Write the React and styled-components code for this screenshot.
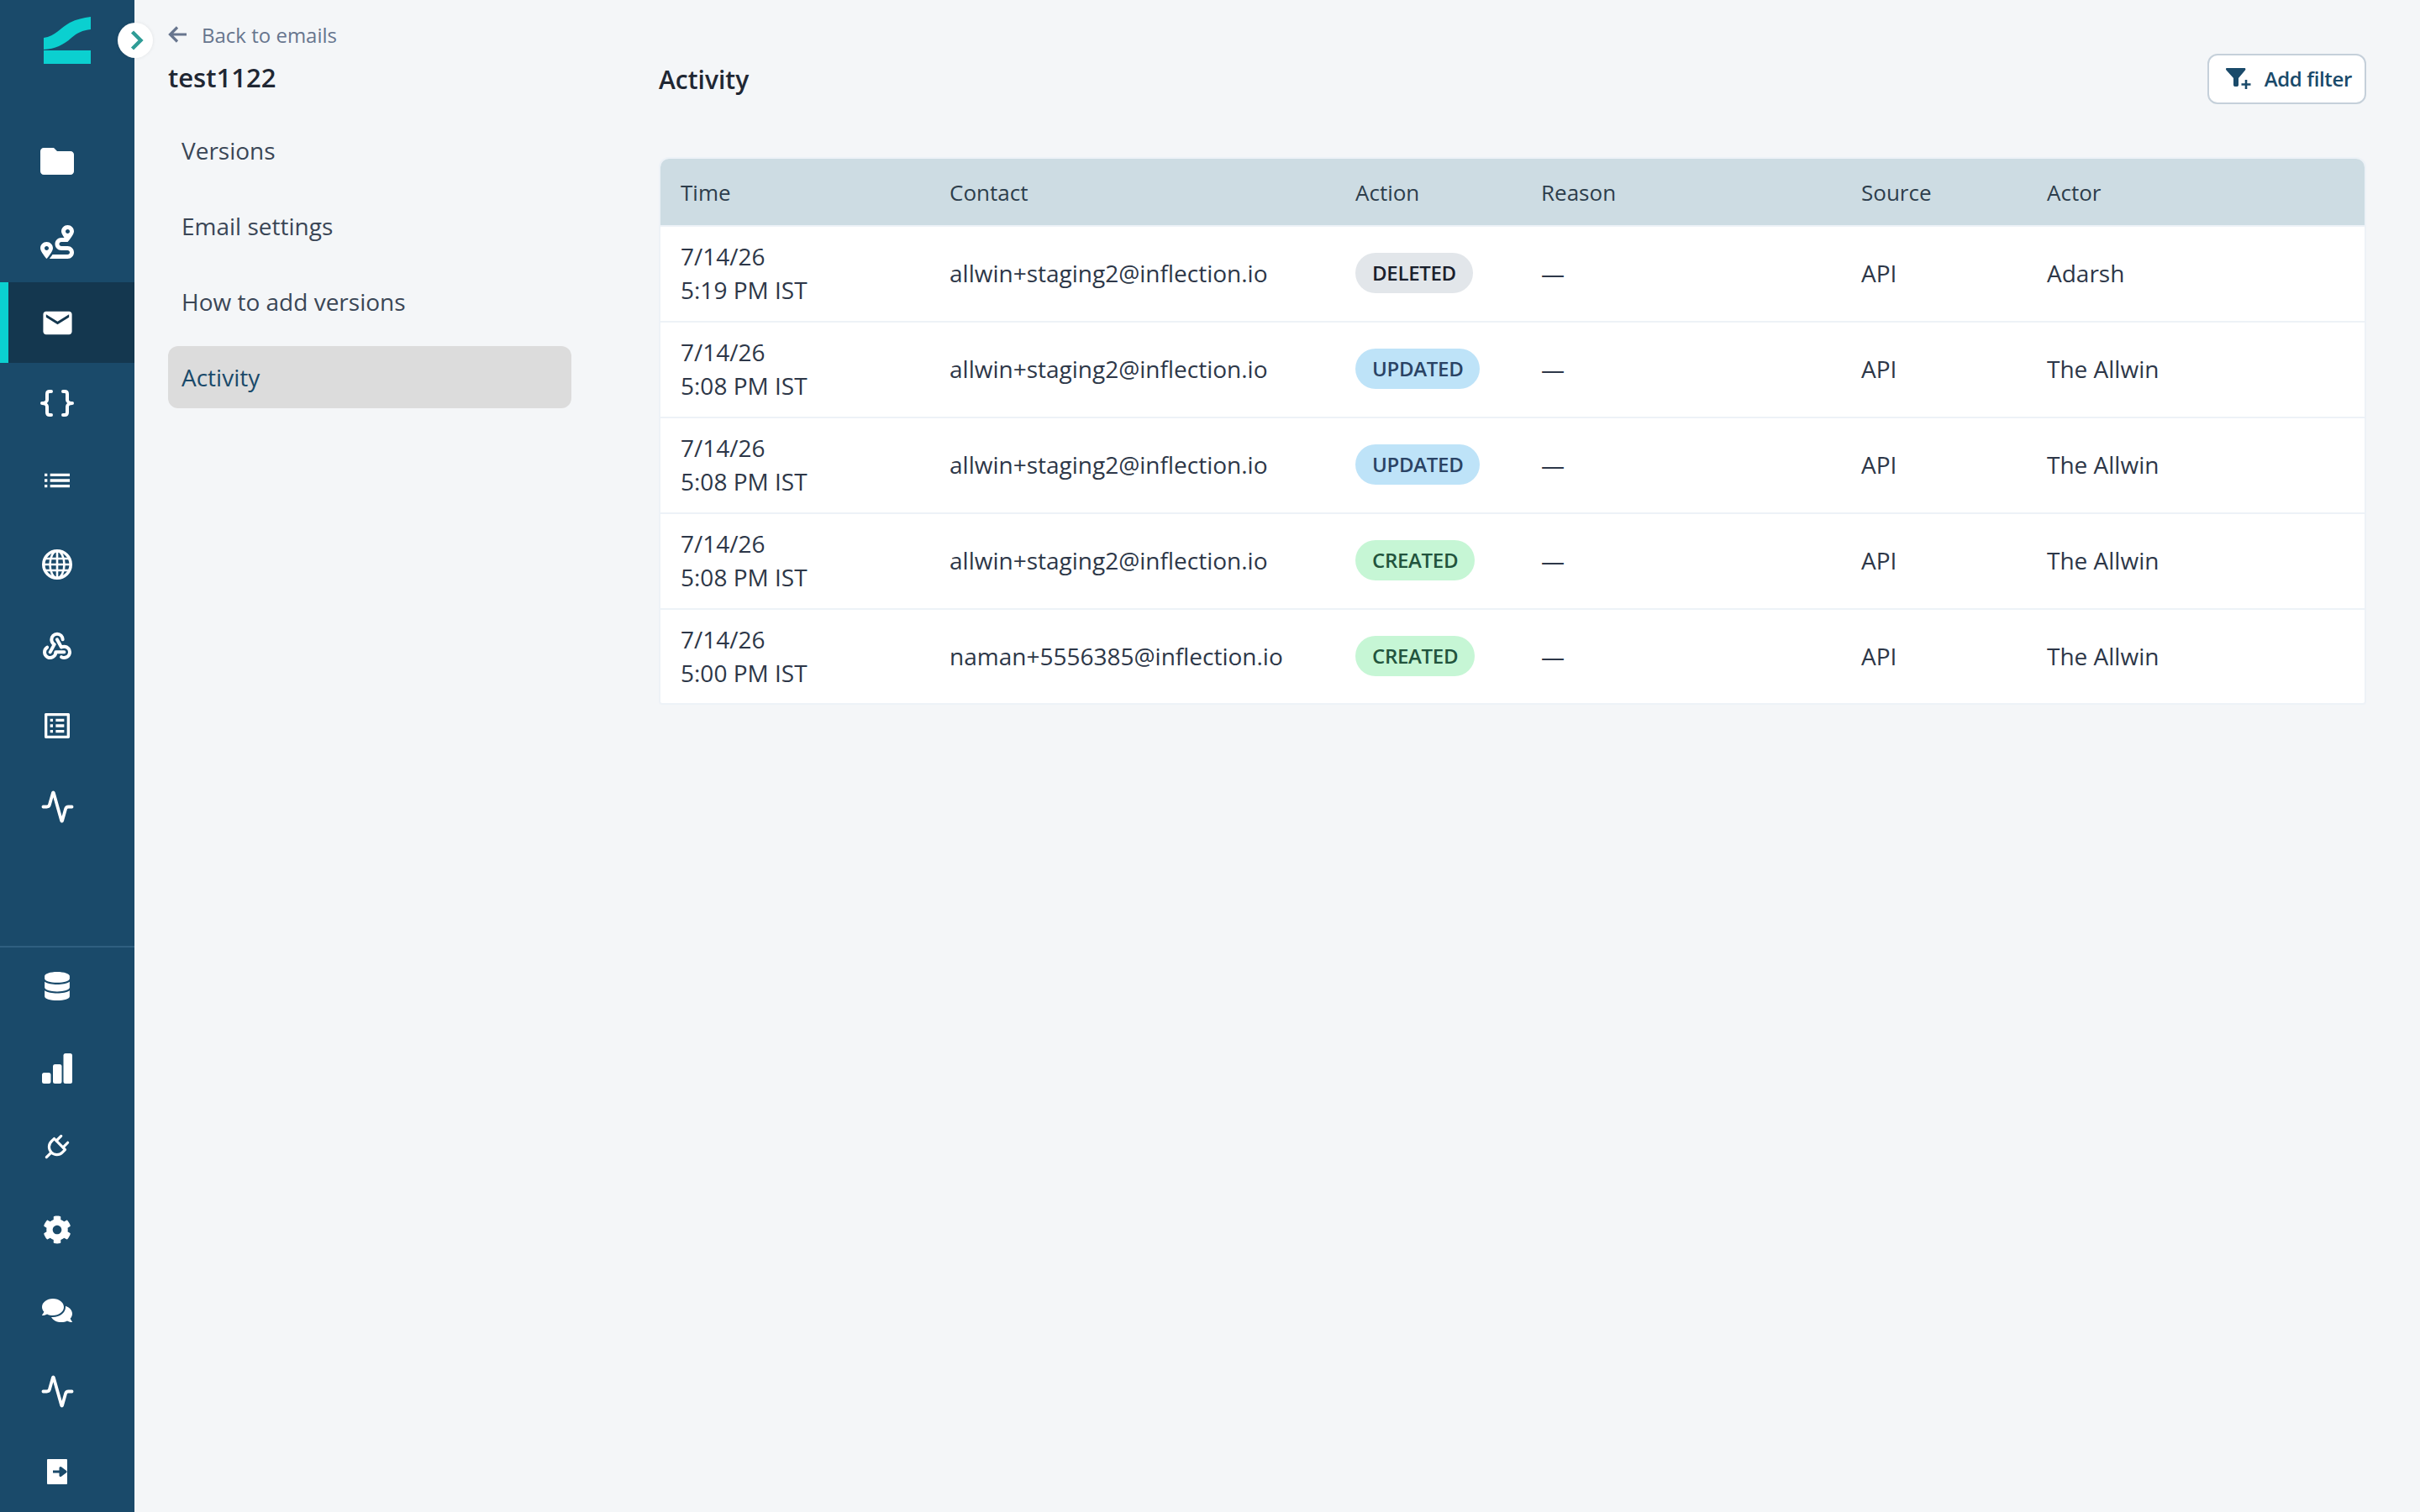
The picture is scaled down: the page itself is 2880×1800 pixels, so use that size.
import styled, { createGlobalStyle } from "styled-components";
import { MdFolder, MdEmail, MdList, MdOutlineListAlt } from "react-icons/md";
import { FaRoute, FaDatabase, FaCog, FaComments } from "react-icons/fa";
import { TbWebhook, TbPlug } from "react-icons/tb";
import { LuActivity } from "react-icons/lu";

const rows = [
  { date: "7/14/26", time: "5:19 PM IST", contact: "allwin+staging2@inflection.io", action: "DELETED", actor: "Adarsh" },
  { date: "7/14/26", time: "5:08 PM IST", contact: "allwin+staging2@inflection.io", action: "UPDATED", actor: "The Allwin" },
  { date: "7/14/26", time: "5:08 PM IST", contact: "allwin+staging2@inflection.io", action: "UPDATED", actor: "The Allwin" },
  { date: "7/14/26", time: "5:08 PM IST", contact: "allwin+staging2@inflection.io", action: "CREATED", actor: "The Allwin" },
  { date: "7/14/26", time: "5:00 PM IST", contact: "naman+5556385@inflection.io", action: "CREATED", actor: "The Allwin" },
];

const badgeColors = {
  DELETED: { bg: "#e2e6ea", fg: "#1a202c" },
  UPDATED: { bg: "#bee3f8", fg: "#2a4365" },
  CREATED: { bg: "#c6f6d5", fg: "#22543d" },
};

function Logo() {
  return (
    <svg width="56" height="56" viewBox="0 0 56 56" fill="#0bd0d0">
      <path d="M0 25C14 23 20 13 31 7C39 3 47 1 56 0V15C46 16 40 19 33 25C23 34 14 38 0 39Z" />
      <rect x="0" y="40" width="56" height="16" />
    </svg>
  );
}

function Braces() {
  return (
    <svg width="40" height="32" viewBox="0 0 40 32" fill="none" stroke="#fff" strokeWidth="4" strokeLinecap="round" strokeLinejoin="round">
      <path d="M13 2H11C9 2 8 3 8 5V12C8 14 6 16 2 16C6 16 8 18 8 20V27C8 29 9 30 11 30H13" />
      <path d="M27 2H29C31 2 32 3 32 5V12C32 14 34 16 38 16C34 16 32 18 32 20V27C32 29 31 30 29 30H27" />
    </svg>
  );
}

function Globe() {
  return (
    <svg width="36" height="36" viewBox="0 0 36 36" fill="none" stroke="#fff">
      <circle cx="18" cy="18" r="16.2" strokeWidth="3.6" />
      <g strokeWidth="2.6">
        <path d="M3 11H33M2 18H34M3 25H33" />
        <path d="M18 2V34" />
        <ellipse cx="18" cy="18" rx="8.5" ry="16" />
      </g>
    </svg>
  );
}

function Bars() {
  return (
    <svg width="36" height="36" viewBox="0 0 36 36" fill="#fff">
      <rect x="0" y="23" width="10.5" height="13" rx="2.5" />
      <rect x="13" y="13" width="10.5" height="23" rx="2.5" />
      <rect x="25.5" y="0" width="10.5" height="36" rx="2.5" />
    </svg>
  );
}

function ExitIcon() {
  return (
    <svg width="24" height="30" viewBox="0 0 24 30">
      <rect width="24" height="30" rx="1" fill="#fff" />
      <path d="M7 15H19M16 10.5L22 15L16 19.5Z" fill="#1a4a6a" stroke="#1a4a6a" strokeWidth="3" strokeLinejoin="round" />
    </svg>
  );
}

function FilterPlus() {
  return (
    <svg width="32" height="26" viewBox="0 0 32 26">
      <path d="M1 0H22C23 0 24 1 23 2.5L15 12V20C15 21.5 14 22 13 22H11C10 22 9 21.5 9 20V12L0.5 2.5C-0.5 1 0 0 1 0Z" fill="#1a4a6a" />
      <path d="M24 14V25M18.5 19.5H29.5" stroke="#1a4a6a" strokeWidth="2.6" fill="none" />
    </svg>
  );
}

function BackArrow() {
  return (
    <svg width="22" height="20" viewBox="0 0 22 20" fill="none" stroke="#67758e" strokeWidth="3.2">
      <path d="M22 10H3M11 1.5L2.5 10L11 18.5" />
    </svg>
  );
}

export default function App() {
  return (
    <>
      <GlobalStyle />
      <Page>
        <Sidebar>
          <LogoBox>
            <Logo />
          </LogoBox>
          <CollapseButton>
            <svg width="16" height="24" viewBox="0 0 16 24" fill="none" stroke="#2f9c96" strokeWidth="4.4">
              <path d="M2.5 2L12.5 12L2.5 22" />
            </svg>
          </CollapseButton>
          <NavItem><MdFolder size={48} /></NavItem>
          <NavItem><FaRoute size={40} /></NavItem>
          <NavItem $active><MdEmail size={41} /></NavItem>
          <NavItem><Braces /></NavItem>
          <NavItem><ListIcon size={40} /></NavItem>
          <NavItem><Globe /></NavItem>
          <NavItem><TbWebhook size={40} strokeWidth={2.4} /></NavItem>
          <NavItem><MdOutlineListAlt size={40} /></NavItem>
          <NavItem><LuActivity size={41} strokeWidth={2.2} /></NavItem>
          <BottomGroup>
            <NavItem><DatabaseIcon size={34} /></NavItem>
            <NavItem><Bars /></NavItem>
            <NavItem><PlugIcon size={38} /></NavItem>
            <NavItem><FaCog size={34} /></NavItem>
            <NavItem><FaComments size={36} /></NavItem>
            <NavItem><LuActivity size={41} strokeWidth={2.2} /></NavItem>
            <NavItem><ExitIcon /></NavItem>
          </BottomGroup>
        </Sidebar>

        <SubNav>
          <BackLink>
            <BackArrow />
            <span>Back to emails</span>
          </BackLink>
          <EmailName>test1122</EmailName>
          <SubNavList>
            <SubNavItem>Versions</SubNavItem>
            <SubNavItem>Email settings</SubNavItem>
            <SubNavItem>How to add versions</SubNavItem>
            <SubNavItem $active>Activity</SubNavItem>
          </SubNavList>
        </SubNav>

        <Main>
          <Header>
            <Title>Activity</Title>
            <FilterButton>
              <FilterPlus />
              <FilterLabel>Add filter</FilterLabel>
            </FilterButton>
          </Header>
          <TableCard>
            <Table>
              <thead>
                <tr>
                  <Th $width={320}>Time</Th>
                  <Th $width={483}>Contact</Th>
                  <Th $width={221}>Action</Th>
                  <Th $width={381}>Reason</Th>
                  <Th $width={221}>Source</Th>
                  <Th>Actor</Th>
                </tr>
              </thead>
              <tbody>
                {rows.map((row, i) => (
                  <Row key={i}>
                    <Td>
                      {row.date}
                      <br />
                      {row.time}
                    </Td>
                    <Td>{row.contact}</Td>
                    <Td>
                      <Badge $bg={badgeColors[row.action].bg} $fg={badgeColors[row.action].fg}>
                        {row.action}
                      </Badge>
                    </Td>
                    <Td>—</Td>
                    <Td>API</Td>
                    <Td>{row.actor}</Td>
                  </Row>
                ))}
              </tbody>
            </Table>
          </TableCard>
        </Main>
      </Page>
    </>
  );
}

const GlobalStyle = createGlobalStyle`
  * {
    box-sizing: border-box;
  }
  html, body {
    margin: 0;
    padding: 0;
    background: #f4f6f8;
  }
  body {
    font-family: "Open Sans", "Liberation Sans", sans-serif;
    color: #2d3748;
  }
`;

const Page = styled.div`
  display: flex;
  width: 2880px;
  height: 1800px;
  overflow: hidden;
  background: #f4f6f8;
`;

const Sidebar = styled.aside`
  position: relative;
  width: 160px;
  height: 100%;
  flex-shrink: 0;
  display: flex;
  flex-direction: column;
  background: #1a4a6a;
`;

const LogoBox = styled.div`
  height: 144px;
  padding: 20px 0 0 52px;
`;

const CollapseButton = styled.div`
  position: absolute;
  top: 27px;
  left: 140px;
  width: 42px;
  height: 42px;
  border-radius: 50%;
  background: #fff;
  box-shadow: 0 0 4px rgba(0, 0, 0, 0.08);
  display: flex;
  align-items: center;
  justify-content: center;
  padding-left: 4px;
`;

const NavItem = styled.div`
  height: 96px;
  flex-shrink: 0;
  display: flex;
  align-items: center;
  justify-content: center;
  padding-right: ${(props) => (props.$active ? "34px" : "24px")};
  color: #fff;
  background: ${(props) => (props.$active ? "#14374f" : "transparent")};
  border-left: ${(props) => (props.$active ? "10px solid #0bd0d0" : "none")};
`;

const ListIcon = styled(MdList)`
  margin-bottom: 8px;
`;

const DatabaseIcon = styled(FaDatabase)`
  margin-bottom: 4px;
`;

const PlugIcon = styled(TbPlug)`
  margin-bottom: 6px;
`;

const BottomGroup = styled.div`
  margin-top: auto;
  border-top: 2px solid #2f5f80;
`;

const SubNav = styled.nav`
  width: 624px;
  flex-shrink: 0;
  padding: 26px 0 0 40px;
`;

const BackLink = styled.div`
  display: flex;
  align-items: center;
  gap: 18px;
  height: 30px;
  font-size: 24px;
  color: #67758e;
  svg {
    flex-shrink: 0;
  }
`;

const EmailName = styled.h2`
  margin: 14px 0 0;
  font-size: 31px;
  line-height: 44px;
  font-weight: 600;
  color: #1f2733;
`;

const SubNavList = styled.div`
  display: flex;
  flex-direction: column;
  gap: 16px;
  margin-top: 28px;
  width: 480px;
`;

const SubNavItem = styled.div`
  height: 74px;
  display: flex;
  align-items: center;
  padding: 0 16px;
  font-size: 28px;
  border-radius: 12px;
  color: ${(props) => (props.$active ? "#1a4a6a" : "#3a4656")};
  background: ${(props) => (props.$active ? "#dcdcdc" : "transparent")};
`;

const Main = styled.main`
  flex: 1;
  padding: 64px 64px 0 0;
`;

const Header = styled.div`
  display: flex;
  align-items: center;
  justify-content: space-between;
  margin-bottom: 63px;
`;

const Title = styled.h1`
  margin: 0;
  font-size: 30px;
  font-weight: 600;
  color: #1f2733;
`;

const FilterButton = styled.button`
  display: flex;
  align-items: center;
  gap: 14px;
  height: 60px;
  padding: 0 15px 0 20px;
  font-family: inherit;
  font-size: 24px;
  font-weight: 600;
  letter-spacing: -0.35px;
  color: #1a4a6a;
  background: #fff;
  border: 2px solid #c5d0da;
  border-radius: 12px;
`;

const FilterLabel = styled.span`
  margin-bottom: 2px;
`;

const TableCard = styled.div`
  border: 2px solid #edf2f7;
  border-radius: 12px 12px 4px 4px;
  overflow: hidden;
  background: #fff;
`;

const Table = styled.table`
  width: 100%;
  border-collapse: collapse;
  table-layout: fixed;
`;

const Th = styled.th`
  width: ${(props) => (props.$width ? props.$width + "px" : "auto")};
  height: 80px;
  padding: 0 24px;
  text-align: left;
  font-size: 26px;
  font-weight: 500;
  color: #2d3e4c;
  background: #cddce3;
  border-bottom: 2px solid #edf2f7;
`;

const Row = styled.tr`
  height: 114px;
  border-bottom: 2px solid #edf2f7;
  &:last-child {
    height: 112px;
    border-bottom: none;
  }
`;

const Td = styled.td`
  padding: 0 24px 2px;
  font-size: 28px;
  line-height: 40px;
  color: #2d3748;
`;

const Badge = styled.span`
  display: inline-flex;
  align-items: center;
  height: 48px;
  padding: 0 20px;
  border-radius: 24px;
  font-size: 24px;
  font-weight: 600;
  letter-spacing: -0.3px;
  line-height: 1;
  vertical-align: middle;
  background: ${(props) => props.$bg};
  color: ${(props) => props.$fg};
`;
